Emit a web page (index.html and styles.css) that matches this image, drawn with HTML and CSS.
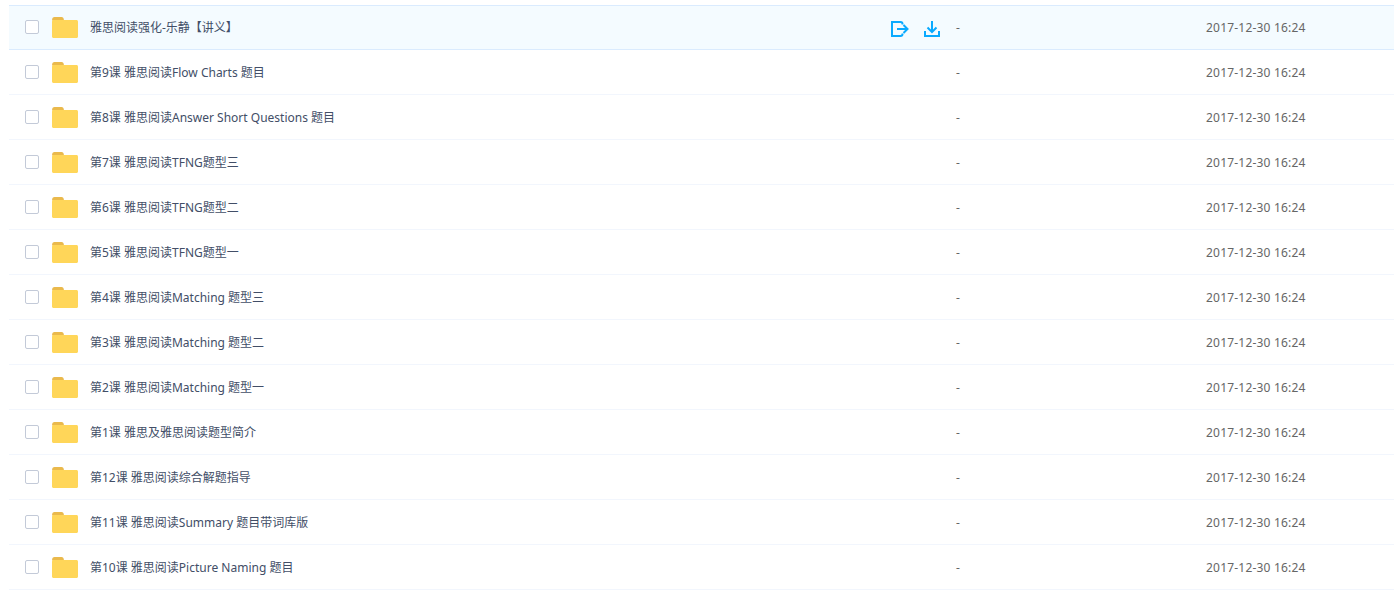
FILE: index.html
```html
<!DOCTYPE html>
<html lang="zh">
<head>
<meta charset="utf-8">
<title>文件列表</title>
<link rel="stylesheet" href="styles.css">
</head>
<body>
<svg class="defs" width="0" height="0" aria-hidden="true">
  <symbol id="folder" viewBox="0 0 26 21">
    <path d="M0 3.500C0 1 1 0 2.500 0H9.500C11 0 11.700 .8 12 3.500H0Z" fill="#eab94c"/>
    <path d="M0 4.500C0 3.600 .7 3 1.500 3H24.500C25.300 3 26 3.600 26 4.500V19.500C26 20.400 25.300 21 24.500 21H1.500C.7 21 0 20.400 0 19.500Z" fill="#ffd659"/>
  </symbol>
</svg>
<ul class="list">
  <li class="row row-active">
    <span class="check"></span>
    <svg class="folder"><use href="#folder"/></svg>
    <span class="name">雅思阅读强化-乐静【讲义】</span>
    <span class="actions">
      <svg class="action-out" viewBox="0 0 18 16" fill="none" stroke="#09aaff" stroke-width="2">
        <path d="M11.500 3.500V3C11.500 1.800 10.700 1 9.500 1H1V15H9.500C10.700 15 11.500 14.200 11.500 13V12.500"/>
        <path d="M6 8H16.500M12.500 4L16.500 8L12.500 12"/>
      </svg>
      <svg class="action-down" viewBox="0 0 16 16" fill="none" stroke="#09aaff" stroke-width="2">
        <path d="M8 0V10.500M3.500 6.500L8 11L12.500 6.500"/>
        <path d="M1 10V15H15V10"/>
      </svg>
    </span>
    <span class="size">-</span>
    <span class="date">2017-12-30 16:24</span>
  </li>
  <li class="row"><span class="check"></span><svg class="folder"><use href="#folder"/></svg><span class="name">第9课 雅思阅读Flow Charts 题目</span><span class="size">-</span><span class="date">2017-12-30 16:24</span></li>
  <li class="row"><span class="check"></span><svg class="folder"><use href="#folder"/></svg><span class="name">第8课 雅思阅读Answer Short Questions 题目</span><span class="size">-</span><span class="date">2017-12-30 16:24</span></li>
  <li class="row"><span class="check"></span><svg class="folder"><use href="#folder"/></svg><span class="name">第7课 雅思阅读TFNG题型三</span><span class="size">-</span><span class="date">2017-12-30 16:24</span></li>
  <li class="row"><span class="check"></span><svg class="folder"><use href="#folder"/></svg><span class="name">第6课 雅思阅读TFNG题型二</span><span class="size">-</span><span class="date">2017-12-30 16:24</span></li>
  <li class="row"><span class="check"></span><svg class="folder"><use href="#folder"/></svg><span class="name">第5课 雅思阅读TFNG题型一</span><span class="size">-</span><span class="date">2017-12-30 16:24</span></li>
  <li class="row"><span class="check"></span><svg class="folder"><use href="#folder"/></svg><span class="name">第4课 雅思阅读Matching 题型三</span><span class="size">-</span><span class="date">2017-12-30 16:24</span></li>
  <li class="row"><span class="check"></span><svg class="folder"><use href="#folder"/></svg><span class="name">第3课 雅思阅读Matching 题型二</span><span class="size">-</span><span class="date">2017-12-30 16:24</span></li>
  <li class="row"><span class="check"></span><svg class="folder"><use href="#folder"/></svg><span class="name">第2课 雅思阅读Matching 题型一</span><span class="size">-</span><span class="date">2017-12-30 16:24</span></li>
  <li class="row"><span class="check"></span><svg class="folder"><use href="#folder"/></svg><span class="name">第1课 雅思及雅思阅读题型简介</span><span class="size">-</span><span class="date">2017-12-30 16:24</span></li>
  <li class="row"><span class="check"></span><svg class="folder"><use href="#folder"/></svg><span class="name">第12课 雅思阅读综合解题指导</span><span class="size">-</span><span class="date">2017-12-30 16:24</span></li>
  <li class="row"><span class="check"></span><svg class="folder"><use href="#folder"/></svg><span class="name">第11课 雅思阅读Summary 题目带词库版</span><span class="size">-</span><span class="date">2017-12-30 16:24</span></li>
  <li class="row"><span class="check"></span><svg class="folder"><use href="#folder"/></svg><span class="name">第10课 雅思阅读Picture Naming 题目</span><span class="size">-</span><span class="date">2017-12-30 16:24</span></li>
</ul>
</body>
</html>
```
FILE: styles.css
```css
html, body {
  margin: 0;
  padding: 0;
  background: #fff;
  overflow: hidden;
}
body {
  height: 598px;
  padding: 5px 0 0 9px;
  box-sizing: border-box;
  font-family: "Noto Sans", "Noto Sans CJK SC", sans-serif;
  font-size: 12px;
  color: #424e67;
}
.defs {
  position: absolute;
}
.list {
  list-style: none;
  margin: 0;
  padding: 0;
}
.row {
  display: grid;
  grid-template-columns: 27px 38px 800px 66px 250px auto;
  align-items: center;
  height: 45px;
  box-sizing: border-box;
  border-bottom: 1px solid #f2f6fd;
  padding: 1px 0 0 16px;
}
.row-active {
  background: #f4fbff;
  border-top: 1px solid #daebfe;
  border-bottom: 1px solid #daebfe;
  padding-top: 0;
}
.check {
  width: 14px;
  height: 14px;
  box-sizing: border-box;
  border: 1px solid #c3cad8;
  border-radius: 2px;
  background: #fff;
  margin-top: -1px;
}
.folder {
  display: block;
  width: 26px;
  height: 21px;
}
.name {
  white-space: nowrap;
  padding-bottom: 1px;
}
.actions {
  display: flex;
  gap: 15px;
  padding: 3px 0 0 1px;
  align-items: center;
}
.action-out {
  width: 18px;
  height: 16px;
}
.action-down {
  width: 16px;
  height: 16px;
}
.size {
  grid-column: 5;
  color: #666;
}
.date {
  grid-column: 6;
  white-space: nowrap;
  letter-spacing: 0.2px;
  color: #666;
}
```
